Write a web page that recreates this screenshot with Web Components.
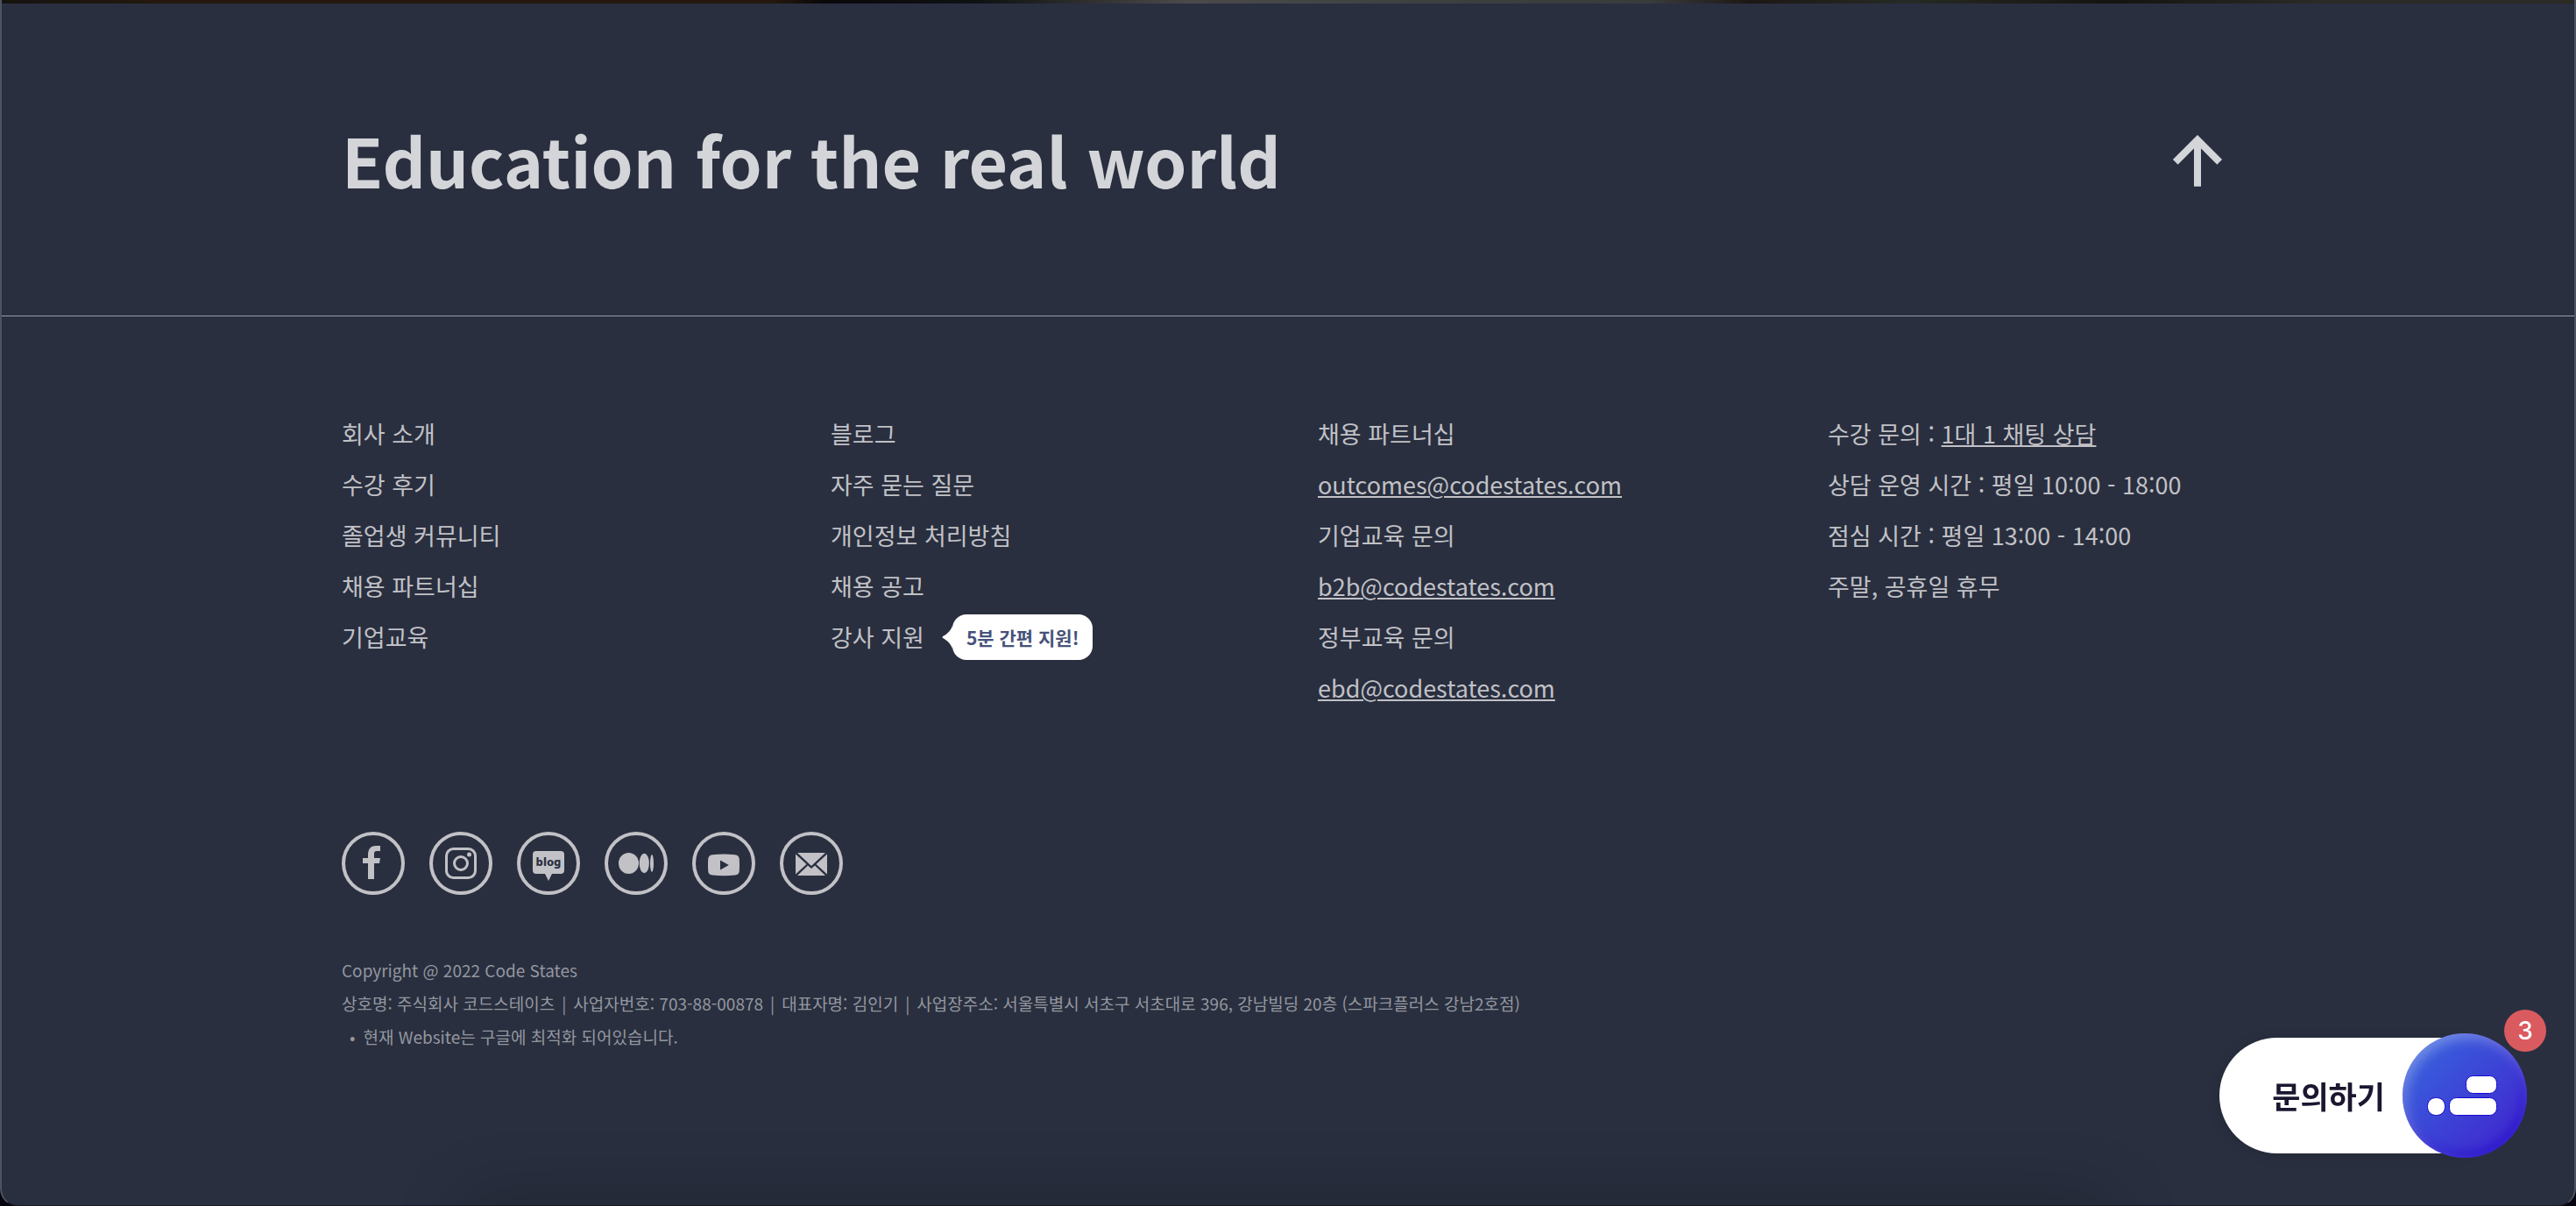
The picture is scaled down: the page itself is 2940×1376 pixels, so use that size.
<!DOCTYPE html>
<html lang="ko">
<head>
<meta charset="utf-8">
<title>Code States</title>
<style>
  html, body { margin: 0; }
  body {
    background: #07040f;
    color: #c1c1c6;
    font-family: "Noto Sans CJK KR", "Noto Sans", sans-serif;
    font-size: 27px;
    line-height: 58px;
  }
</style>
</head>
<body>
<page-footer>
  <footer-headline slot="headline">Education for the real world</footer-headline>

  <link-column slot="columns">
    <footer-link href="#about">회사 소개</footer-link>
    <footer-link href="#reviews">수강 후기</footer-link>
    <footer-link href="#alumni">졸업생 커뮤니티</footer-link>
    <footer-link href="#partners">채용 파트너십</footer-link>
    <footer-link href="#enterprise">기업교육</footer-link>
  </link-column>
  <link-column slot="columns">
    <footer-link href="#blog">블로그</footer-link>
    <footer-link href="#faq">자주 묻는 질문</footer-link>
    <footer-link href="#privacy">개인정보 처리방침</footer-link>
    <footer-link href="#jobs">채용 공고</footer-link>
    <footer-link href="#instructor">강사 지원<speech-bubble slot="after">5분 간편 지원!</speech-bubble></footer-link>
  </link-column>
  <link-column slot="columns">
    <div>채용 파트너십</div>
    <footer-link underlined href="mailto:outcomes@codestates.com">outcomes@codestates.com</footer-link>
    <div>기업교육 문의</div>
    <footer-link underlined href="mailto:b2b@codestates.com">b2b@codestates.com</footer-link>
    <div>정부교육 문의</div>
    <footer-link underlined href="mailto:ebd@codestates.com">ebd@codestates.com</footer-link>
  </link-column>
  <link-column slot="columns">
    <div>수강 문의 : <footer-link inline underlined href="#chat">1대 1 채팅 상담</footer-link></div>
    <div>상담 운영 시간 : 평일 10:00 - 18:00</div>
    <div>점심 시간 : 평일 13:00 - 14:00</div>
    <div>주말, 공휴일 휴무</div>
  </link-column>

  <social-link slot="social" icon="facebook" label="Facebook" href="#facebook"></social-link>
  <social-link slot="social" icon="instagram" label="Instagram" href="#instagram"></social-link>
  <social-link slot="social" icon="blog" label="Blog" href="#naver"></social-link>
  <social-link slot="social" icon="medium" label="Medium" href="#medium"></social-link>
  <social-link slot="social" icon="youtube" label="YouTube" href="#youtube"></social-link>
  <social-link slot="social" icon="mail" label="Mail" href="#mail"></social-link>

  <legal-notice slot="legal"></legal-notice>
</page-footer>
<chat-launcher count="3">문의하기</chat-launcher>

<script>
  const define = (name, html, setup) => {
    const template = document.createElement('template');
    template.innerHTML = html;
    customElements.define(name, class extends HTMLElement {
      constructor() {
        super();
        this.attachShadow({ mode: 'open' }).append(template.content.cloneNode(true));
      }
      connectedCallback() {
        if (setup) setup(this, this.shadowRoot);
      }
    });
  };

  define('page-footer', `
    <style>
      :host { display: block; }
      footer {
        position: relative;
        box-sizing: border-box;
        min-height: 100vh;
        overflow: hidden;
        background: #292f3f;
        border: 2px solid #4c5462;
        border-top: 0;
        border-bottom: 1px solid #1b1a28;
        border-radius: 0 0 20px 20px;
      }
      /* edge of the photo section above */
      .photo {
        height: 4px;
        background: linear-gradient(90deg, #15130f, #24180f 6%, #24180f 30%, #08080a 32%, #101112 38%, #4a4a4a 46%, #3a403c 58%, #3a3c3c 64%, #1c1715 68%, #272a26 74%, #15130f 82%, #2c2a24 90%, #2c2a24);
      }
      /* soft shade at the lower edge */
      .shade {
        position: absolute;
        left: 18%; right: 18%; top: 100%;
        height: 40px;
        box-shadow: 0 0 80px rgba(0, 0, 0, .3);
      }
      .wrap { box-sizing: border-box; max-width: 2160px; margin: 0 auto; }
      hr { margin: 0; border: 0; height: 1px; background: #9b9da5; }
      .columns {
        display: grid;
        grid-template-columns: 558fr 556fr 582fr 464fr;
        padding-top: 105px;
      }
      .social { display: flex; gap: 28px; padding-top: 135px; }
      .legal { padding: 67px 0; }
    </style>
    <footer>
      <div class="photo"></div>
      <div class="wrap"><slot name="headline"></slot></div>
      <hr>
      <div class="wrap">
        <nav class="columns"><slot name="columns"></slot></nav>
        <div class="social"><slot name="social"></slot></div>
        <div class="legal"><slot name="legal"></slot></div>
      </div>
      <div class="shade"></div>
    </footer>`);

  define('footer-headline', `
    <style>
      :host {
        display: flex;
        align-items: center;
        justify-content: space-between;
        height: 356px;
        color: #d4d5d9;
      }
      h2 { margin: 0; font-size: 77px; line-height: 120px; font-weight: 700; }
      button { all: unset; display: block; cursor: pointer; }
      svg { display: block; width: 84px; height: 84px; fill: none; stroke: currentColor; stroke-width: 2.3; }
    </style>
    <h2><slot></slot></h2>
    <button type="button" aria-label="Back to top">
      <svg viewBox="0 0 24 24"><path d="M12 20.800V5.600M4.800 12.800 12 5.600l7.200 7.200"/></svg>
    </button>`,
    (host, root) => {
      root.querySelector('button').onclick = () => scrollTo({ top: 0, behavior: 'smooth' });
    });

  define('link-column', `
    <style>:host { display: block; white-space: nowrap; }</style>
    <slot></slot>`);

  define('footer-link', `
    <style>
      :host { display: flex; align-items: center; }
      :host([inline]) { display: inline; }
      a { color: inherit; text-decoration: none; }
      :host([underlined]) a {
        text-decoration: underline;
        text-decoration-thickness: 2px;
        text-underline-offset: 2px;
      }
    </style>
    <a><slot></slot></a><slot name="after"></slot>`,
    (host, root) => { root.querySelector('a').href = host.getAttribute('href'); });

  define('speech-bubble', `
    <style>
      :host {
        display: flex;
        align-items: center;
        margin-left: 20px;
        color: #46527a;
        font-size: 21px;
        font-weight: 700;
        line-height: 52px;
      }
      svg { display: block; width: 12px; height: 26px; fill: #fff; }
      span { padding: 0 16px; background: #fff; border-radius: 16px; }
    </style>
    <svg viewBox="0 0 12 26"><path d="M12 0C10 6 5 10 1 12Q0 13 1 14C5 16 10 20 12 26Z"/></svg>
    <span><slot></slot></span>`);

  const icons = {
    facebook: `<path d="M30 54V36h-6v-6h6v-4c0-6 3-10 9-10h5v6h-4c-2.200 0-3 1-3 3v5h7l-1 6h-6v18z"/>`,
    instagram: `<g fill="none" stroke="currentColor" stroke-width="3"><rect x="19.500" y="19.500" width="33" height="33" rx="8"/><circle cx="36" cy="36" r="7.500"/></g><circle cx="45.500" cy="26" r="2.500"/>`,
    blog: `<path d="M22 22h28q4 0 4 4v18q0 4-4 4H40l-4 8-4-8H22q-4 0-4-4V26q0-4 4-4z"/><text x="36" y="39" text-anchor="middle" font-family="Noto Sans, sans-serif" font-size="13" font-weight="800" fill="#292f3f">blog</text>`,
    medium: `<ellipse cx="27.500" cy="36" rx="11.500" ry="12"/><ellipse cx="45.300" cy="36" rx="5.600" ry="11.200"/><ellipse cx="54" cy="36" rx="2" ry="10"/>`,
    youtube: `<path fill-rule="evenodd" d="M23 26.200Q36 25 49 26.200q4.500.6 4.800 5 .5 6.800 0 13.600-.3 4.400-4.800 4.800Q36 50.800 23 49.600q-4.500-.4-4.800-4.800-.5-6.800 0-13.600.3-4.400 4.800-5zM32 32.500v11l9.800-5.500z"/>`,
    mail: `<path d="M20 24h32L36 39zM18 25.500 30.500 37 18 48.500zM54 25.500 41.500 37 54 48.500zM20 50l12-11.500 4 3.500 4-3.500L52 50z"/>`
  };

  define('social-link', `
    <style>
      :host { display: block; }
      a { display: block; color: inherit; }
      svg { display: block; width: 72px; height: 72px; fill: currentColor; }
    </style>
    <a><svg viewBox="0 0 72 72" aria-hidden="true"></svg></a>`,
    (host, root) => {
      const a = root.querySelector('a');
      a.href = host.getAttribute('href');
      a.setAttribute('aria-label', host.getAttribute('label'));
      root.querySelector('svg').innerHTML =
        '<circle cx="36" cy="36" r="34" fill="none" stroke="currentColor" stroke-width="4"/>' +
        icons[host.getAttribute('icon')];
    });

  define('legal-notice', `
    <style>
      :host { display: block; color: #94979f; font-size: 19px; line-height: 38px; }
      p, ul { margin: 0; padding: 0; }
      .company { display: flex; flex-wrap: wrap; }
      .company span + span::before { content: "|"; padding: 0 8px; }
      ul { list-style: none; }
      li { display: flex; gap: 9px; padding-left: 9px; }
      li::before { content: "•"; }
    </style>
    <p>Copyright @ 2022 Code States</p>
    <p class="company"><span>상호명: 주식회사 코드스테이츠</span><span>사업자번호: 703-88-00878</span><span>대표자명: 김인기</span><span>사업장주소: 서울특별시 서초구 서초대로 396, 강남빌딩 20층 (스파크플러스 강남2호점)</span></p>
    <ul><li>현재 Website는 구글에 최적화 되어있습니다.</li></ul>`);

  define('chat-launcher', `
    <style>
      :host { position: fixed; right: 56px; bottom: 55px; display: block; }
      button {
        all: unset;
        display: flex;
        align-items: center;
        cursor: pointer;
        color: #1c1630;
        font-size: 35px;
        font-weight: 700;
        line-height: 132px;
      }
      .label {
        padding: 0 92px 0 60px;
        margin-right: -72px;
        background: #fff;
        border-radius: 66px 0 0 66px;
        box-shadow: 0 2px 16px rgba(0, 0, 0, .12);
      }
      .orb {
        width: 142px;
        height: 142px;
        border-radius: 50%;
        background: linear-gradient(135deg, #385fdc 15%, #402ad0 85%);
        box-shadow:
          inset 4px 6px 14px rgba(255, 255, 255, .3),
          inset -4px -6px 12px rgba(30, 10, 200, .6);
      }
      svg { display: block; fill: #fff; stroke: #1409cf; stroke-width: 1; }
      .badge {
        position: absolute;
        right: -22px;
        top: -27px;
        width: 48px;
        border-radius: 50%;
        background: #da5b5f;
        color: #fff;
        font: 500 28px/48px Inter, sans-serif;
        text-align: center;
      }
    </style>
    <button type="button">
      <span class="label"><slot></slot></span>
      <span class="orb"><svg viewBox="0 0 142 142" width="142" height="142" aria-hidden="true">
        <rect x="72.500" y="48.500" width="35" height="20" rx="8"/>
        <rect x="28.500" y="73.500" width="20" height="20" rx="9"/>
        <rect x="53.500" y="73.500" width="54" height="20" rx="8"/>
      </svg></span>
      <span class="badge"></span>
    </button>`,
    (host, root) => { root.querySelector('.badge').textContent = host.getAttribute('count'); });
</script>
</body>
</html>
